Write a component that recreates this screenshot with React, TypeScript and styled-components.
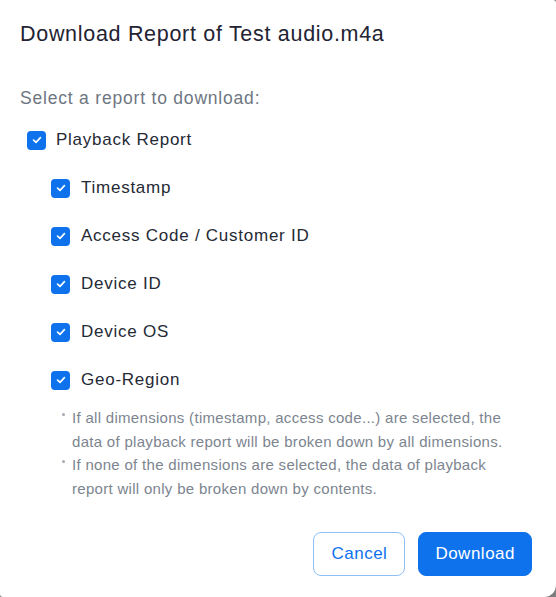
import * as React from "react";
import styled, { createGlobalStyle } from "styled-components";

const GlobalStyle = createGlobalStyle`
  html, body {
    margin: 0;
    padding: 0;
    background: #7d7d7d;
  }
  body {
    font-family: "Liberation Sans", Arial, sans-serif;
    -webkit-font-smoothing: antialiased;
  }
`;

const DIMENSIONS = [
  "Timestamp",
  "Access Code / Customer ID",
  "Device ID",
  "Device OS",
  "Geo-Region",
];

const NOTES = [
  [
    "If all dimensions (timestamp, access code...) are selected, the",
    "data of playback report will be broken down by all dimensions.",
  ],
  [
    "If none of the dimensions are selected, the data of playback",
    "report will only be broken down by contents.",
  ],
];

interface ICheckProps {
  checked: boolean;
  onToggle: () => void;
  label: string;
  nested?: boolean;
}

const CheckRow = (props: ICheckProps) => {
  const { checked, onToggle, label, nested } = props;
  return (
    <Row nested={nested} onClick={onToggle}>
      <Box checked={checked}>
        {checked && (
          <svg width="10" height="8" viewBox="0 0 10 8">
            <path
              d="M1.6 4.1L4 6.3L8.4 1.7"
              fill="none"
              stroke="#fff"
              strokeWidth="1.7"
              strokeLinecap="round"
              strokeLinejoin="round"
            />
          </svg>
        )}
      </Box>
      <Label>{label}</Label>
    </Row>
  );
};

const App = () => {
  const [report, setReport] = React.useState(true);
  const [dims, setDims] = React.useState<boolean[]>(DIMENSIONS.map(() => true));

  const toggleDim = (index: number) => {
    setDims((prev) => prev.map((v, i) => (i === index ? !v : v)));
  };

  return (
    <>
      <GlobalStyle />
      <Dialog>
        <Title>Download Report of Test audio.m4a</Title>
        <SectionLabel>Select a report to download:</SectionLabel>
        <CheckList>
          <CheckRow
            checked={report}
            onToggle={() => setReport(!report)}
            label="Playback Report"
          />
          {DIMENSIONS.map((dim, i) => (
            <CheckRow
              key={dim}
              nested
              checked={dims[i]}
              onToggle={() => toggleDim(i)}
              label={dim}
            />
          ))}
        </CheckList>
        <Notes>
          {NOTES.map((lines, i) => (
            <Note key={i}>
              {lines.map((line) => (
                <NoteLine key={line}>{line}</NoteLine>
              ))}
            </Note>
          ))}
        </Notes>
        <Footer>
          <Button>Cancel</Button>
          <Button primary>Download</Button>
        </Footer>
      </Dialog>
    </>
  );
};

export default App;

const Dialog = styled.div`
  box-sizing: border-box;
  width: 556px;
  height: 597px;
  background: #fff;
  border-radius: 0 3px 12px 3px;
  padding: 20px 24px 21px 20px;
  display: flex;
  flex-direction: column;
`;

const Title = styled.h1`
  margin: 0;
  font-size: 21.5px;
  line-height: 28px;
  font-weight: 400;
  letter-spacing: 0.7px;
  color: #232333;
`;

const SectionLabel = styled.div`
  margin-top: 38px;
  font-size: 17.5px;
  line-height: 24px;
  letter-spacing: 0.8px;
  color: #6e7681;
`;

const CheckList = styled.div`
  margin-top: 18px;
  display: flex;
  flex-direction: column;
  gap: 24px;
`;

const Row = styled.div<{ nested?: boolean }>`
  display: flex;
  align-items: center;
  height: 24px;
  padding-left: ${(p) => (p.nested ? "31px" : "7px")};
  gap: ${(p) => (p.nested ? "11px" : "10px")};
  cursor: pointer;
`;

const Box = styled.span<{ checked: boolean }>`
  box-sizing: border-box;
  width: 19px;
  height: 19px;
  border-radius: 4px;
  display: flex;
  align-items: center;
  justify-content: center;
  background: ${(p) => (p.checked ? "#0e72ed" : "#fff")};
  border: ${(p) => (p.checked ? "none" : "1px solid #babacc")};
`;

const Label = styled.span`
  font-size: 17px;
  letter-spacing: 0.75px;
  color: #252a35;
`;

const Notes = styled.div`
  margin-top: 14px;
  padding-left: 52px;
  margin-right: -20px;
`;

const Note = styled.div`
  position: relative;
  &::before {
    content: "";
    position: absolute;
    left: -10px;
    top: 7px;
    width: 3px;
    height: 3px;
    border-radius: 50%;
    background: #a3aab2;
  }
`;

const NoteLine = styled.div`
  font-size: 15px;
  line-height: 23.5px;
  letter-spacing: 0.3px;
  color: #7c858f;
  white-space: nowrap;
`;

const Footer = styled.div`
  margin-top: auto;
  display: flex;
  justify-content: flex-end;
  gap: 13px;
`;

const Button = styled.button<{ primary?: boolean }>`
  box-sizing: border-box;
  height: 44px;
  padding: 0 ${(p) => (p.primary ? "16px" : "17px")};
  border-radius: 8px;
  font-family: "Liberation Sans", Arial, sans-serif;
  font-size: 17px;
  letter-spacing: 0.5px;
  cursor: pointer;
  color: ${(p) => (p.primary ? "#fff" : "#0e72ed")};
  background: ${(p) => (p.primary ? "#0e72ed" : "#fff")};
  border: 1px solid ${(p) => (p.primary ? "#0e72ed" : "#8fbff5")};
`;
